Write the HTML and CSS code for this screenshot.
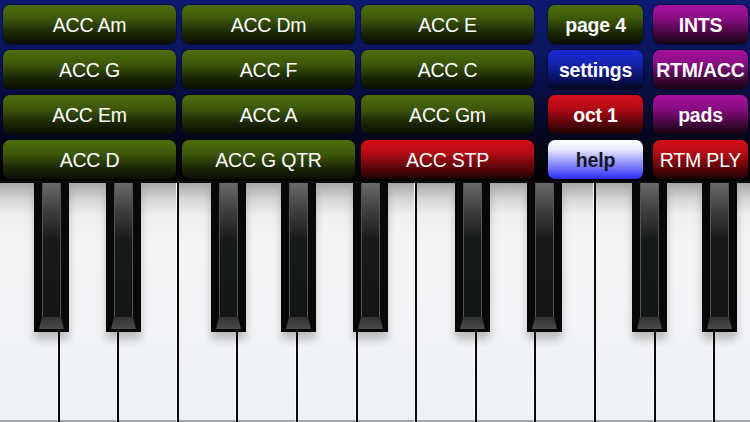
FILE: index.html
```html
<!DOCTYPE html>
<html>
<head>
<meta charset="utf-8">
<link rel="stylesheet" href="styles.css">
</head>
<body>
<div class="app">
  <div class="panel">
    <div class="group-left">
      <div class="btn green">ACC Am</div>
      <div class="btn green">ACC Dm</div>
      <div class="btn green">ACC E</div>
      <div class="btn green">ACC G</div>
      <div class="btn green">ACC F</div>
      <div class="btn green">ACC C</div>
      <div class="btn green">ACC Em</div>
      <div class="btn green">ACC A</div>
      <div class="btn green">ACC Gm</div>
      <div class="btn green">ACC D</div>
      <div class="btn green">ACC G QTR</div>
      <div class="btn red">ACC STP</div>
    </div>
    <div class="group-right">
      <div class="btn green bold">page 4</div>
      <div class="btn magenta bold">INTS</div>
      <div class="btn blue bold">settings</div>
      <div class="btn magenta bold">RTM/ACC</div>
      <div class="btn red bold">oct 1</div>
      <div class="btn magenta bold">pads</div>
      <div class="btn light bold">help</div>
      <div class="btn red">RTM PLY</div>
    </div>
  </div>
  <div class="keyboard">
    <div class="wk"></div><div class="wk"></div><div class="wk"></div><div class="wk"></div>
    <div class="wk"></div><div class="wk"></div><div class="wk"></div><div class="wk"></div>
    <div class="wk"></div><div class="wk"></div><div class="wk"></div><div class="wk"></div>
    <div class="wk"></div>
    <div class="bk" style="left:34px"><div class="bk-body"></div><div class="bk-front"></div></div>
    <div class="bk" style="left:106px"><div class="bk-body"></div><div class="bk-front"></div></div>
    <div class="bk" style="left:211px"><div class="bk-body"></div><div class="bk-front"></div></div>
    <div class="bk" style="left:281px"><div class="bk-body"></div><div class="bk-front"></div></div>
    <div class="bk" style="left:353px"><div class="bk-body"></div><div class="bk-front"></div></div>
    <div class="bk" style="left:455px"><div class="bk-body"></div><div class="bk-front"></div></div>
    <div class="bk" style="left:527px"><div class="bk-body"></div><div class="bk-front"></div></div>
    <div class="bk" style="left:632px"><div class="bk-body"></div><div class="bk-front"></div></div>
    <div class="bk" style="left:702px"><div class="bk-body"></div><div class="bk-front"></div></div>
  </div>
</div>
</body>
</html>
```
FILE: styles.css
```css
* { box-sizing: border-box; }
html, body { margin: 0; padding: 0; background: #000; }
.app {
  width: 750px;
  height: 422px;
  overflow: hidden;
  font-family: "Liberation Sans", Arial, sans-serif;
}
.panel {
  height: 181px;
  display: flex;
  gap: 14px;
  padding: 5px 2px 0 3px;
  background: linear-gradient(#0e1a70 0%, #0b165e 30%, #060b33 60%, #020309 92%, #000 100%);
}
.group-left {
  display: grid;
  grid-template-columns: 173px 173px 173px;
  grid-auto-rows: 39px;
  column-gap: 6px;
  row-gap: 6px;
}
.group-right {
  display: grid;
  grid-template-columns: 95px 95px;
  grid-auto-rows: 39px;
  column-gap: 10px;
  row-gap: 6px;
}
.btn {
  border-radius: 7px;
  display: flex;
  align-items: center;
  justify-content: center;
  padding-top: 2px;
  font-size: 19.5px;
  color: #fff;
  white-space: nowrap;
  letter-spacing: -0.2px;
  box-shadow: 0 0 0 1px rgba(0,0,0,0.35);
}
.bold { font-weight: bold; }
.green { background: linear-gradient(#4d6e0b 0%, #3d5809 35%, #1a2605 72%, #0a0f02 100%); }
.red { background: linear-gradient(#d40f19 0%, #b10b14 35%, #5a050a 72%, #1c0204 100%); }
.blue { background: linear-gradient(#1b2ad6 0%, #1522b0 35%, #0a1262 72%, #030620 100%); }
.magenta { background: linear-gradient(#a6109e 0%, #880c82 35%, #45063f 72%, #170214 100%); }
.light {
  background: linear-gradient(#ffffff 0%, #e6e6ff 25%, #8f8ff8 60%, #2c2cf6 100%);
  color: #14142a;
}
.keyboard {
  position: relative;
  height: 241px;
  display: flex;
  gap: 2px;
  padding-top: 2px;
  background: #0c0c0c;
}
.wk {
  flex: 0 0 57.6px;
  height: 100%;
  background: linear-gradient(#a6a6a6 0px, #d6d6d6 16px, #efefef 32px, #f5f5f6 60px, #eef2f7 100%);
  border-right: 1px solid #fafafa;
  border-bottom: 2px solid #a4a8ad;
}
.bk {
  position: absolute;
  top: 2px;
  width: 35px;
  height: 149px;
  background: #080808;
  padding: 0 8px 3px;
  display: flex;
  flex-direction: column;
  box-shadow: 0 8px 8px rgba(0,0,0,0.22);
}
.bk-body {
  flex: 1;
  background: linear-gradient(#6a6a6a 0px, #3e3e3e 28px, #161a18 58px, #121614 100%);
  border-left: 1px solid #555;
  border-right: 1px solid #555;
}
.bk-front {
  height: 12px;
  margin: 0 -3px;
  background: linear-gradient(#333 0%, #4a4a4a 100%);
  clip-path: polygon(3px 0, calc(100% - 3px) 0, 100% 100%, 0 100%);
}
```
